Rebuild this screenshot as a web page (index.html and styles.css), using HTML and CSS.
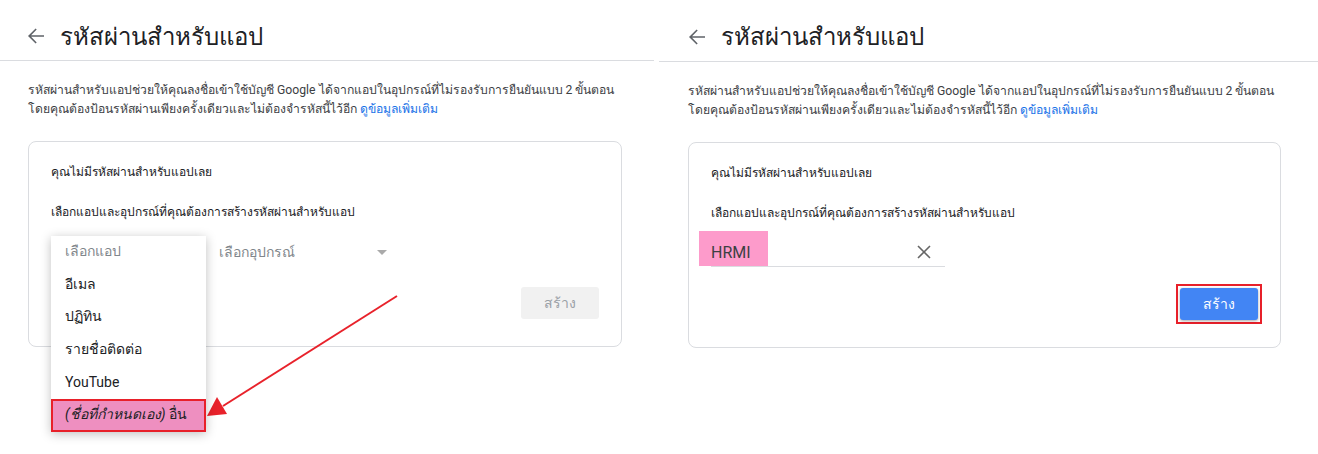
FILE: index.html
```html
<!DOCTYPE html>
<html lang="th">
<head>
  <meta charset="UTF-8">
  <meta name="viewport" content="width=device-width, initial-scale=1.0">
  <title>รหัสผ่านสำหรับแอป</title>
  <link rel="stylesheet" href="styles.css">
</head>
<body>
  <div class="screens">
    <!-- step 1: choose app -->
    <section class="panel panel-left">
      <header class="panel-header">
        <svg class="back" width="16" height="16" viewBox="0 0 16 16">
          <path d="M16 7.2H3.1l5.6-5.6L7.6.6 0 8l7.6 7.4 1.1-1-5.6-5.6H16z" fill="#5f6368"/>
        </svg>
        <h1>รหัสผ่านสำหรับแอป</h1>
      </header>
      <div class="panel-body">
        <p class="intro">รหัสผ่านสำหรับแอปช่วยให้คุณลงชื่อเข้าใช้บัญชี Google ได้จากแอปในอุปกรณ์ที่ไม่รองรับการยืนยันแบบ 2 ขั้นตอน<br>โดยคุณต้องป้อนรหัสผ่านเพียงครั้งเดียวและไม่ต้องจำรหัสนี้ไว้อีก <a href="#">ดูข้อมูลเพิ่มเติม</a></p>
        <div class="card">
          <p class="card-line">คุณไม่มีรหัสผ่านสำหรับแอปเลย</p>
          <p class="card-line second">เลือกแอปและอุปกรณ์ที่คุณต้องการสร้างรหัสผ่านสำหรับแอป</p>
          <div class="select-row">
            <div class="select app-select">
              <ul class="menu">
                <li class="placeholder">เลือกแอป</li>
                <li>อีเมล</li>
                <li>ปฏิทิน</li>
                <li>รายชื่อติดต่อ</li>
                <li>YouTube</li>
                <li class="picked"><em>(ชื่อที่กำหนดเอง)</em> อื่น</li>
              </ul>
            </div>
            <div class="select device-select">
              <span>เลือกอุปกรณ์</span>
              <span class="caret"></span>
            </div>
          </div>
          <div class="actions">
            <button class="btn btn-disabled">สร้าง</button>
          </div>
        </div>
      </div>
      <svg class="pointer" width="200" height="130" viewBox="0 0 200 130">
        <line x1="192" y1="4" x2="18" y2="114" stroke="#e8222b" stroke-width="2"/>
        <polygon points="2,124 12,105 22,122" fill="#e8222b"/>
      </svg>
    </section>

    <!-- step 2: custom name -->
    <section class="panel panel-right">
      <header class="panel-header">
        <svg class="back" width="16" height="16" viewBox="0 0 16 16">
          <path d="M16 7.2H3.1l5.6-5.6L7.6.6 0 8l7.6 7.4 1.1-1-5.6-5.6H16z" fill="#5f6368"/>
        </svg>
        <h1>รหัสผ่านสำหรับแอป</h1>
      </header>
      <div class="panel-body">
        <p class="intro">รหัสผ่านสำหรับแอปช่วยให้คุณลงชื่อเข้าใช้บัญชี Google ได้จากแอปในอุปกรณ์ที่ไม่รองรับการยืนยันแบบ 2 ขั้นตอน<br>โดยคุณต้องป้อนรหัสผ่านเพียงครั้งเดียวและไม่ต้องจำรหัสนี้ไว้อีก <a href="#">ดูข้อมูลเพิ่มเติม</a></p>
        <div class="card">
          <p class="card-line">คุณไม่มีรหัสผ่านสำหรับแอปเลย</p>
          <p class="card-line second">เลือกแอปและอุปกรณ์ที่คุณต้องการสร้างรหัสผ่านสำหรับแอป</p>
          <div class="select-row">
            <div class="name-field">
              <span class="name-mark"></span>
              <span class="name-value">HRMI</span>
              <svg class="clear" width="14" height="14" viewBox="0 0 14 14">
                <path d="M1 1 L13 13 M13 1 L1 13" stroke="#666" stroke-width="1.6"/>
              </svg>
            </div>
          </div>
          <div class="actions">
            <span class="focus-box">
              <button class="btn btn-primary">สร้าง</button>
            </span>
          </div>
        </div>
      </div>
    </section>
  </div>
</body>
</html>
```

FILE: styles.css
```css
body {
  margin: 0;
  background: #fff;
  font-family: Roboto, 'Noto Sans', 'Liberation Sans', sans-serif;
  color: #333;
}

.screens {
  display: flex;
  gap: 5px;
  width: 1318px;
  height: 454px;
}

.panel {
  position: relative;
}

.panel-left {
  width: 654px;
}

.panel-right {
  flex: 1;
}

.panel-header {
  height: 61px;
  border-bottom: 1px solid #dadce0;
  display: flex;
  align-items: center;
  padding: 12px 0 0 28px;
  box-sizing: border-box;
}

.panel-right .panel-header {
  height: 62px;
  padding-left: 30px;
}

.back {
  margin-right: 16px;
}

h1 {
  margin: 0;
  font-size: 24px;
  font-weight: 400;
  color: #202124;
}

.panel-body {
  padding: 0 32px 0 28px;
}

.panel-right .panel-body {
  padding-left: 29px;
  padding-right: 37px;
}

.intro {
  margin: 20px 0 22px;
  font-size: 12.2px;
  line-height: 19px;
  color: #3c4043;
}

.intro a {
  color: #1a73e8;
  text-decoration: none;
}

.card {
  border: 1px solid #dadce0;
  border-radius: 8px;
  padding: 20px 22px 27px;
}

.panel-right .card {
  margin-top: 22px;
}

.card-line {
  margin: 0;
  font-size: 12px;
  line-height: 20px;
  color: #202124;
}

.card-line.second {
  margin-top: 20px;
}

.select-row {
  display: flex;
  gap: 18px;
  margin-top: 14px;
  height: 32px;
}

.select {
  position: relative;
  height: 32px;
}

.app-select {
  width: 150px;
}

.device-select {
  width: 174px;
  display: flex;
  align-items: center;
  justify-content: space-between;
  font-size: 14px;
  color: #80868b;
}

.caret {
  width: 0;
  height: 0;
  border-left: 5px solid transparent;
  border-right: 5px solid transparent;
  border-top: 5px solid #aaa;
  margin-right: 6px;
}

.menu {
  position: absolute;
  left: 0;
  top: 0;
  z-index: 5;
  width: 155px;
  margin: 0;
  padding: 0;
  list-style: none;
  background: #fff;
  box-shadow: 0 2px 10px rgba(0, 0, 0, 0.25);
}

.menu li {
  height: 32.6px;
  display: flex;
  align-items: center;
  padding: 0 0 2px 14px;
  font-size: 14px;
  color: #202124;
  box-sizing: border-box;
}

.menu .placeholder {
  color: #80868b;
}

.menu .picked {
  background: #ee8fc0;
  outline: 2px solid #e8202a;
  outline-offset: -2px;
}

.menu .picked em {
  margin-right: 4px;
}

.actions {
  display: flex;
  justify-content: flex-end;
  margin-top: 19px;
}

.btn {
  width: 78px;
  height: 32px;
  border: none;
  border-radius: 3px;
  font-family: inherit;
  font-size: 14px;
}

.btn-disabled {
  background: #f1f1f1;
  color: #9aa0a6;
}

.btn-primary {
  background: #4285f4;
  color: #fff;
  box-shadow: 0 1px 3px rgba(0, 0, 0, 0.35);
}

.focus-box {
  display: block;
  padding: 2px;
  border: 2px solid #e8202a;
  margin: -4px -4px -4px 0;
}

.name-field {
  position: relative;
  width: 234px;
  height: 29px;
  border-bottom: 1px solid #dadce0;
  display: flex;
  align-items: center;
  justify-content: space-between;
}

.name-mark {
  position: absolute;
  left: -12px;
  top: -6px;
  width: 69px;
  height: 35px;
  background: #fd9bcb;
}

.name-value {
  position: relative;
  font-size: 16px;
  color: #3c4043;
  padding-top: 2px;
}

.clear {
  margin-right: 14px;
}

.pointer {
  position: absolute;
  left: 205px;
  top: 292px;
}
```
